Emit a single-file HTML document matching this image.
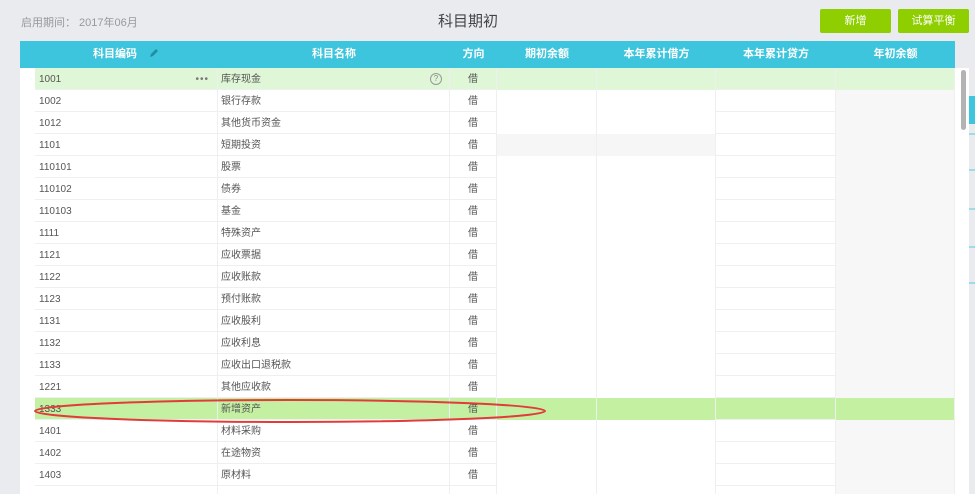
<!DOCTYPE html>
<html style="overflow:hidden;height:494px"><head><meta charset="utf-8"><style>
*{margin:0;padding:0;box-sizing:border-box}
body{width:975px;height:494px;overflow:hidden;background:#e9ebef;font-family:"Liberation Sans","Noto Sans CJK SC",sans-serif;position:relative}
.abs{position:absolute}
.hdr{left:20px;top:41px;width:935px;height:27px;background:#3cc5dc;color:#fff;font-size:11px;font-weight:bold}
.hdr span{position:absolute;top:0;line-height:27px;text-align:center}
.body{left:20px;top:68px;width:935px;height:426px;background:#fff;overflow:hidden}
.row{position:absolute;left:15px;width:920px;height:22px;border-bottom:1px solid #eef0f0;font-size:10px;color:#555}
.row div{position:absolute;top:0;height:22px;line-height:23px;border-right:1px solid #eef0f0}
.btn{top:9px;height:24px;background:#8fce00;color:#fff;font-size:11px;line-height:24px;text-align:center;border-radius:2px}
</style></head><body>
<div class="abs" style="left:21px;top:14px;font-size:11px;color:#999">启用期间： 2017年06月</div>
<div class="abs" style="left:438px;top:10px;font-size:15px;color:#444">科目期初</div>
<div class="abs btn" style="left:820px;width:71px">新增</div>
<div class="abs btn" style="left:898px;width:71px">试算平衡</div>
<div class="abs hdr">
<span style="left:15px;width:183px">科目编码 <svg width="12" height="12" viewBox="0 0 12 12" style="vertical-align:-2px;margin-left:8px"><path d="M2 10 L3 7 L8 2 L10 4 L5 9 Z" fill="#1f8fa3"/></svg></span>
<span style="left:198px;width:232px">科目名称</span>
<span style="left:430px;width:47px">方向</span>
<span style="left:477px;width:100px">期初余额</span>
<span style="left:577px;width:119px">本年累计借方</span>
<span style="left:696px;width:120px">本年累计贷方</span>
<span style="left:816px;width:119px">年初余额</span>
</div>
<div class="abs body" id="b"></div>
<div class="abs" style="left:955px;top:68px;width:14px;height:426px;background:#fff"></div>
<div class="abs" style="left:961px;top:70px;width:5px;height:60px;background:#b3b3b3;border-radius:3px"></div>
<div class="abs" style="left:969px;top:96px;width:6px;height:28px;background:#3cc5dc"></div>
<div class="abs" style="left:969px;top:133px;width:6px;height:2px;background:#9fdbe5"></div>
<div class="abs" style="left:969px;top:169px;width:6px;height:2px;background:#9fdbe5"></div>
<div class="abs" style="left:969px;top:208px;width:6px;height:2px;background:#9fdbe5"></div>
<div class="abs" style="left:969px;top:246px;width:6px;height:2px;background:#9fdbe5"></div>
<div class="abs" style="left:969px;top:282px;width:6px;height:2px;background:#9fdbe5"></div>
<script>
var d=[["1001","库存现金"],["1002","银行存款"],["1012","其他货币资金"],["1101","短期投资"],["110101","股票"],["110102","债券"],["110103","基金"],["1111","特殊资产"],["1121","应收票据"],["1122","应收账款"],["1123","预付账款"],["1131","应收股利"],["1132","应收利息"],["1133","应收出口退税款"],["1221","其他应收款"],["1333","新增资产"],["1401","材料采购"],["1402","在途物资"],["1403","原材料"],["",""]];
var h="";
d.forEach(function(r,i){
var bg=i==0?"#dff7d6":(i==15?"#c4f0a2":"#fff");
var g=i==3?"#f6f6f6":bg;var gl=(i==0||i==15)?bg:"#f7f7f7";
h+='<div class="row" style="top:'+(i*22)+'px;background:'+bg+'">'+
'<div style="left:0;width:183px;padding-left:4px">'+r[0]+(i==0?'<span style="position:absolute;right:8px;letter-spacing:1px;color:#777">•••</span>':'')+'</div>'+
'<div style="left:183px;width:232px;padding-left:3px">'+r[1]+(i==0?'<span style="position:absolute;right:7px;top:5px;width:12px;height:12px;border:1px solid #999;border-radius:50%;font-size:8px;line-height:10px;text-align:center;color:#888">?</span>':'')+'</div>'+
'<div style="left:415px;width:47px;text-align:center">'+(r[0]?'借':'')+'</div>'+
'<div style="left:462px;width:100px;background:'+g+'"></div>'+
'<div style="left:562px;width:119px;background:'+g+'"></div>'+
'<div style="left:681px;width:120px"></div>'+
'<div style="left:801px;width:119px;background:'+gl+'"></div></div>';
});
document.getElementById("b").innerHTML=h;
</script>
<svg class="abs" style="left:0;top:0" width="975" height="494"><ellipse cx="290" cy="411" rx="255" ry="11" fill="none" stroke="#e23b3b" stroke-width="2"/></svg>
</body></html>
